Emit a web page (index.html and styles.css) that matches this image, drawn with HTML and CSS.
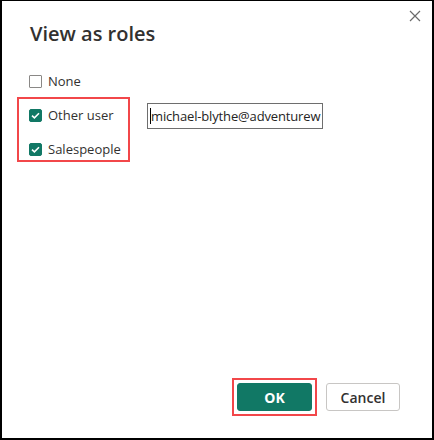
FILE: index.html
```html
<!DOCTYPE html>
<html lang="en">
<head>
<meta charset="utf-8">
<title>View as roles</title>
<link rel="stylesheet" href="styles.css">
</head>
<body>
<div class="dialog">
  <button class="close" aria-label="Close">
    <svg width="12" height="12" viewBox="0 0 12 12"><path d="M1 1L11 11M11 1L1 11" stroke="#6b6b6b" stroke-width="1.2" fill="none"/></svg>
  </button>
  <h1 class="title">View as roles</h1>
  <div class="options">
    <label class="opt opt-none"><span class="cb"></span><span class="lbl">None</span></label>
    <div class="group-row">
      <div class="highlight">
        <label class="opt"><span class="cb checked"><svg width="9" height="7" viewBox="0 0 9 7"><path d="M1 3.6L3.4 5.8L8 1.2" stroke="#fff" stroke-width="1.6" fill="none"/></svg></span><span class="lbl">Other user</span></label>
        <label class="opt"><span class="cb checked"><svg width="9" height="7" viewBox="0 0 9 7"><path d="M1 3.6L3.4 5.8L8 1.2" stroke="#fff" stroke-width="1.6" fill="none"/></svg></span><span class="lbl">Salespeople</span></label>
      </div>
      <div class="field"><span class="caret"></span><span class="val">michael-blythe@adventurew</span></div>
    </div>
  </div>
  <div class="footer">
    <div class="ok-wrap"><button class="btn ok">OK</button></div>
    <button class="btn cancel">Cancel</button>
  </div>
</div>
</body>
</html>
```
FILE: styles.css
```css
html, body {
  margin: 0;
  padding: 0;
  background: #fff;
}
body {
  font-family: "Open Sans", "Noto Sans", sans-serif;
  color: #252423;
}
.dialog {
  box-sizing: border-box;
  width: 434px;
  height: 440px;
  border-style: solid;
  border-color: #000;
  border-width: 1px 2px 2px 2px;
  display: flex;
  flex-direction: column;
  position: relative;
  background: #fff;
}
.close {
  position: absolute;
  top: 8px;
  right: 10px;
  width: 14px;
  height: 14px;
  padding: 0;
  border: 0;
  background: transparent;
  display: flex;
  align-items: center;
  justify-content: center;
}
.title {
  margin: 19px 0 0 28px;
  font-size: 20px;
  line-height: 28px;
  font-weight: 600;
  color: #323130;
}
.options {
  margin-top: 23px;
  padding-left: 15px;
  display: flex;
  flex-direction: column;
}
.opt {
  display: flex;
  align-items: center;
  height: 20px;
  font-size: 13px;
  color: #323130;
}
.opt-none {
  margin-left: 12px;
}
.cb {
  box-sizing: border-box;
  width: 13px;
  height: 13px;
  border: 1px solid #8a8886;
  border-radius: 1px;
  margin-right: 6px;
  display: flex;
  align-items: center;
  justify-content: center;
  flex: none;
}
.cb.checked {
  background: #117865;
  border-color: #117865;
  border-radius: 2px;
}
.group-row {
  margin-top: 6px;
  display: flex;
  align-items: flex-start;
}
.highlight {
  box-sizing: border-box;
  width: 113px;
  border: 2px solid #f2474a;
  padding: 6px 0 1px 10px;
  display: flex;
  flex-direction: column;
  gap: 14px;
}
.field {
  box-sizing: border-box;
  margin: 6px 0 0 17px;
  width: 176px;
  height: 26px;
  border: 1px solid #6e6e6e;
  display: flex;
  align-items: center;
  overflow: hidden;
  white-space: nowrap;
  font-size: 13px;
  letter-spacing: -0.15px;
  color: #252423;
  padding-left: 2px;
}
.caret {
  width: 1px;
  height: 16px;
  background: #000;
  flex: none;
}
.footer {
  margin-top: auto;
  display: flex;
  justify-content: flex-end;
  align-items: center;
  padding: 0 32px 22px 0;
  gap: 9px;
}
.ok-wrap {
  border: 2px solid #f2474a;
  padding: 3px;
  display: flex;
}
.btn {
  box-sizing: border-box;
  height: 28px;
  font-family: "Open Sans", "Noto Sans", sans-serif;
  font-size: 14px;
  font-weight: 600;
  border-radius: 3px;
  padding: 0;
  display: flex;
  align-items: center;
  justify-content: center;
}
.ok {
  width: 75px;
  background: #117865;
  color: #fff;
  border: 1px solid #117865;
  font-weight: 700;
}
.cancel {
  width: 74px;
  background: #fff;
  color: #323130;
  border: 1px solid #c8c6c4;
}
```
